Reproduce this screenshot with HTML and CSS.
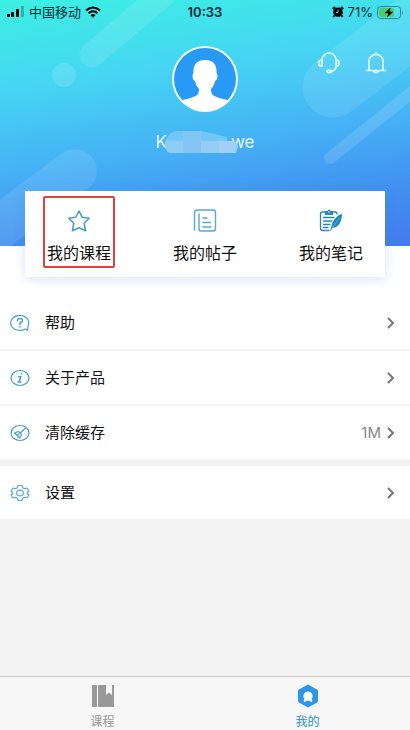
FILE: index.html
```html
<!DOCTYPE html>
<html lang="zh-CN">
<head>
<meta charset="utf-8">
<meta name="viewport" content="width=device-width, initial-scale=1">
<title>我的</title>
<link rel="stylesheet" href="styles.css">
</head>
<body>
<div class="app">
  <header class="hero">
    <svg class="hero-art" viewBox="0 0 410 246" preserveAspectRatio="xMidYMin slice" aria-hidden="true">
      <g fill="none" stroke="#fff" stroke-linecap="round">
        <path d="M92 55 180-20" stroke-width="25" stroke-opacity=".11"/>
        <path d="M64 75h.01" stroke-width="24" stroke-opacity=".13"/>
        <path d="M333 87 470-18" stroke-width="61" stroke-opacity=".1"/>
        <path d="M330 158 440 70" stroke-width="12" stroke-opacity=".13"/>
        <path d="M75 171-10 234" stroke-width="44" stroke-opacity=".1"/>
      </g>
    </svg>
    <div class="status">
      <div class="status-side">
        <svg width="19" height="12" viewBox="0 0 19 12" aria-hidden="true"><path d="M1 8h3v3H1zM5 6h3v5H5zM10 3h3v8h-3z"/><path d="M15 0h3v11h-3z" opacity=".25"/></svg>
        <span class="carrier">中国移动</span>
        <svg width="16" height="12" viewBox="0 0 16 12" aria-hidden="true"><g fill="none" stroke="#000" stroke-width="2"><path d="M1 4.500Q8-1.500 15 4.500M3.500 7.200Q8 3.300 12.500 7.200"/></g><path d="M5.500 9Q8 7 10.500 9L8 11.800z"/></svg>
      </div>
      <time class="clock">10:33</time>
      <div class="status-side status-end">
        <svg width="12" height="12" viewBox="0 0 12 12" aria-hidden="true"><circle cx="6" cy="6.200" r="4.800"/><path d="M.8 3 3 .9M11.200 3 9 .9M2.500 9.500 1.500 11M9.500 9.500l1 1.500" stroke="#000" stroke-width="2"/><path d="M6 3.500v3H3.800" fill="none" stroke="#53dfe8"/></svg>
        <span>71%</span>
        <svg width="27" height="13" viewBox="0 0 27 13" aria-hidden="true"><rect x=".5" y=".5" width="23" height="12" rx="3" fill="none" stroke="#278994"/><rect x="2" y="2" width="15" height="9" rx="2" fill="#4bce68"/><path d="M25 4.500q1.500 2 0 4z" fill="#278994"/><path d="M13.500 1.500 7.500 7.300h3.700l-1 4.200 6-5.800h-3.700z"/></svg>
      </div>
    </div>
    <div class="profile">
      <svg class="avatar" viewBox="0 0 66 66" role="img" aria-label="头像">
        <clipPath id="face"><circle cx="33" cy="33" r="32"/></clipPath>
        <circle cx="33" cy="33" r="33" fill="#f5fdff"/>
        <circle cx="33" cy="33" r="31" fill="#2999f6"/>
        <path clip-path="url(#face)" fill="#fff" d="M33 14c-8.500 0-12 5-11.500 12.500 0 1-1 1.500-1 3.500s1.200 5 2.500 5c.8 4 2.200 6 4 8 0 4-1 6-4.500 7.500C17 53 13 53 8 55v12h50V55c-5-2-9-2-14.500-4.500C40 49 39 47 39 43c1.800-2 3.200-4 4-8 1.300 0 2.500-3 2.500-5s-1-2.500-1-3.500C45 19 41.500 14 33 14z"/>
      </svg>
      <div class="tools">
        <button type="button" aria-label="客服"><svg width="24" height="24" viewBox="0 0 24 24"><g fill="none" stroke="#ecffff" stroke-width="1.600" stroke-linecap="round" stroke-linejoin="round"><path d="M5 9.500C5.400 5 8 2 12 2s6.800 3 7.200 7.500M5 9c-2 0-3.500 1-3.500 3S3 15.200 5 15.200zM19.200 9c2 0 3 1 3 3s-1 3.200-3 3.200zM19.200 15.200c-.6 3.200-2.200 4.800-5 5.200"/><rect x="10" y="19.200" width="4.500" height="2.300" rx="1"/></g></svg></button>
        <button type="button" aria-label="通知"><svg width="24" height="24" viewBox="0 0 24 24"><path fill="none" stroke="#ecffff" stroke-width="1.600" stroke-linecap="round" stroke-linejoin="round" d="M12 2v1.500M2.500 19.500h19M5 19.500V10a7 6.500 0 0 1 14 0v9.500M9.500 20q2.500 3.500 5 0"/></svg></button>
      </div>
    </div>
    <div class="name">
      <span>K</span>
      <svg class="mosaic" viewBox="0 0 74 24" aria-hidden="true">
        <path fill="#72c7f4" d="M0 12Q3 2 12 1h24l14 3 12 3v6H0z"/>
        <path fill="#82c6f5" d="M18 1h18v12H18z"/>
        <path fill="#8dcdf6" d="M0 11h18v12H4Q0 20 0 16z"/>
        <path fill="#86c5f6" d="M18 13h18v10H18z"/>
        <path fill="#94cef7" d="M36 11h18v12H36z"/>
        <path fill="#a1d0f7" d="M54 11h16l3 5-2 7H54z"/>
      </svg>
      <span class="name-end">we</span>
    </div>
  </header>

  <nav class="card">
    <a href="#courses" class="shortcut marked">
      <svg width="24" height="24" viewBox="0 0 24 24" aria-hidden="true"><path fill="none" stroke="#459fcd" stroke-width="1.600" stroke-linejoin="round" d="m12 2 3.200 6.200 7 1-5 5.100 1.400 7.400L12 18.800 5.400 21.700l1.400-7.400-5-5.100 7-1z"/></svg>
      <span>我的课程</span>
    </a>
    <a href="#posts" class="shortcut">
      <svg width="24" height="24" viewBox="0 0 24 24" aria-hidden="true"><g fill="none" stroke="#59a9d1" stroke-width="1.400" stroke-linecap="round"><path d="M1.500 21V4q0-3 3-3H20q2.500 0 2.500 2.500v16q0 2.500-2.500 2.500H8q-2 0-2-2.500V5M10 9h4M10 13.500h7.500M10 18h8"/></g></svg>
      <span>我的帖子</span>
    </a>
    <a href="#notes" class="shortcut">
      <svg width="24" height="24" viewBox="0 0 24 24" aria-hidden="true"><g fill="none" stroke="#2686b8" stroke-width="1.300" stroke-linecap="round"><path d="M10 21.500H3.500q-2 0-2-2V5q0-2 2-2H16q2 0 2 2M4.500 8.500H15M4.500 12H13M4.500 15.500H11M4.500 18.500H9"/></g><path fill="#2686b8" d="M6 2h2.500q0-1.500 1.500-1.500T11.500 2H14v4H6z"/><circle cx="10" cy="3" r=".8" fill="#fff"/><path fill="#1687bf" d="M23 5c-5 1-9.500 7-10.500 12L11 22.500l2.500-3.500C19 18.500 22.500 14 23 5z"/><path d="m20.500 9-7.500 10" stroke="#8acbe7" stroke-width=".7"/></svg>
      <span>我的笔记</span>
    </a>
  </nav>

  <main class="menu">
    <a href="#help" class="row">
      <svg class="row-icon" viewBox="0 0 20 18" aria-hidden="true"><g fill="none" stroke="#48a0cf" stroke-width="1.200" stroke-linecap="round" stroke-linejoin="round"><path d="M15 15A9 7.500 0 1 1 18.200 11.500L17.500 16.500z"/><path stroke-width="1.500" d="M7.500 6.800q0-2.200 2.500-2.200t2.500 2Q12.500 8 10 9v1.500M10 12.800v.2"/></g></svg>
      <span class="row-label">帮助</span>
      <svg class="chevron" viewBox="0 0 8 12" aria-hidden="true"><path d="m1 1 5 5-5 5"/></svg>
    </a>
    <a href="#about" class="row">
      <svg class="row-icon" viewBox="0 0 20 18" aria-hidden="true"><g fill="none" stroke="#48a0cf" stroke-width="1.200" stroke-linecap="round"><ellipse cx="10" cy="9" rx="9" ry="7.500"/><path stroke-width="1.500" d="M11.200 4.800h.2M8.800 7.800h1.900L9.300 13h1.500M8 13h1"/></g></svg>
      <span class="row-label">关于产品</span>
      <svg class="chevron" viewBox="0 0 8 12" aria-hidden="true"><path d="m1 1 5 5-5 5"/></svg>
    </a>
    <a href="#cache" class="row">
      <svg class="row-icon" viewBox="0 0 20 18" aria-hidden="true"><g fill="none" stroke="#48a0cf" stroke-width="1.200" stroke-linecap="round" stroke-linejoin="round"><ellipse cx="10" cy="9" rx="9" ry="7.500"/><path d="m15.200 4.200-4.500 4.300M4.500 9l4-1.500 3 2.800-1.800 3.700zM7.300 11.300l1.500-1.300"/></g></svg>
      <span class="row-label">清除缓存</span>
      <span class="row-value">1M</span>
      <svg class="chevron" viewBox="0 0 8 12" aria-hidden="true"><path d="m1 1 5 5-5 5"/></svg>
    </a>
    <a href="#settings" class="row row-group">
      <svg class="row-icon" viewBox="0 0 20 18" aria-hidden="true"><g fill="none" stroke="#58a9d0" stroke-width="1.200" stroke-linejoin="round"><path d="M8 1.500h4l.7 2.300 1.700.9 2.600-.7 2 3-1.700 1.500v1L19 11l-2 3-2.600-.7-1.700.9-.7 2.300H8l-.7-2.300-1.700-.9L3 14l-2-3 1.700-1.500v-1L1 7l2-3 2.600.7 1.700-.9z"/><ellipse cx="10" cy="9" rx="3.300" ry="2.900"/></g></svg>
      <span class="row-label">设置</span>
      <svg class="chevron" viewBox="0 0 8 12" aria-hidden="true"><path d="m1 1 5 5-5 5"/></svg>
    </a>
  </main>

  <nav class="tabs">
    <a href="#course-tab" class="tab">
      <svg width="24" height="24" viewBox="0 0 24 24" aria-hidden="true"><path fill="#999" d="M1 1h5v22H1zM7 1h8v10l3-2.500 3 2.500V1h2v22H7z"/></svg>
      <span>课程</span>
    </a>
    <a href="#me" class="tab active" aria-current="page">
      <svg width="24" height="24" viewBox="0 0 24 24" aria-hidden="true"><path fill="#2f96e6" stroke="#2f96e6" stroke-width="2" stroke-linejoin="round" d="m12 1.500 9 5.200v10.600l-9 5.200-9-5.200V6.700z"/><path fill="#f6faff" d="M12 7.500a4.500 4.500 0 0 1 3.500 7.500l1 2-1.300 1.200-1.500-1.500h-3.400l-1.500 1.500L7.500 17l1-2A4.500 4.500 0 0 1 12 7.500z"/></svg>
      <span>我的</span>
    </a>
  </nav>
</div>
</body>
</html>
```
FILE: styles.css
```css
* {
  box-sizing: border-box;
}

body {
  margin: 0;
  background: #f3f3f3;
  color: #111;
  font-family: Inter, "Noto Sans CJK SC", sans-serif;
  font-size: 15px;
  line-height: 24px;
}

a {
  color: inherit;
  text-decoration: none;
}

svg {
  display: block;
  flex: none;
}

.app {
  display: flex;
  flex-direction: column;
  min-height: 100vh;
}

.hero {
  position: relative;
  padding-bottom: 92px;
  background: linear-gradient(172deg, #3cf0e2 0%, #46d5f3 30%, #45b0f5 58%, #4290f0 80%, #457bee 100%);
}

.hero-art {
  position: absolute;
  inset: 0;
  width: 100%;
  height: 100%;
}

.status {
  position: relative;
  display: grid;
  grid-template-columns: 1fr auto 1fr;
  align-items: center;
  height: 22px;
  padding: 0 6px;
  color: #0b2a33;
  font-size: 13px;
}

.status-side {
  display: flex;
  align-items: center;
  gap: 4px;
}

.status-end {
  justify-content: flex-end;
}

.clock {
  font-weight: 600;
}

.profile {
  position: relative;
  display: grid;
  grid-template-columns: 1fr auto 1fr;
  margin-top: 24px;
  padding: 0 22px;
}

.avatar {
  grid-column: 2;
  width: 66px;
  height: 66px;
}

.tools {
  display: flex;
  justify-content: flex-end;
  align-items: flex-start;
  gap: 23px;
  padding-top: 5px;
}

.tools button {
  padding: 0;
  border: 0;
  background: none;
  cursor: pointer;
}

.name {
  position: relative;
  display: flex;
  justify-content: center;
  align-items: center;
  margin-top: 18px;
  color: #e9f8ff;
  font-size: 17px;
}

.mosaic {
  z-index: 1;
  width: 74px;
  height: 24px;
  margin-left: -2px;
}

.name-end {
  margin-left: -8px;
}

.card {
  position: relative;
  display: flex;
  justify-content: space-between;
  margin: -55px 25px 0;
  padding: 5px 18px 9px;
  background: #fff;
  box-shadow: 0 2px 10px rgba(70, 120, 240, .22);
}

.hero,
.card {
  z-index: 1;
}

.shortcut {
  display: flex;
  flex-direction: column;
  align-items: center;
  gap: 8px;
  padding: 11px 2px 1px;
  border: 2px solid transparent;
  border-radius: 2px;
  font-size: 16px;
}

.marked {
  border-color: #d9433c;
}

.menu {
  margin-top: -55px;
  padding-top: 74px;
  background: #fff;
}

.row {
  display: flex;
  align-items: center;
  height: 55px;
  padding: 0 15px 0 10px;
  border-bottom: 2px solid #f3f3f3;
  background: #fff;
}

.row-icon {
  width: 20px;
  height: 18px;
  margin-right: 15px;
}

.row-label {
  flex: 1;
}

.row-value {
  margin-right: 6px;
  color: #888;
}

.row-group {
  height: 60px;
  border-top: 5px solid #f3f3f3;
}

.chevron {
  width: 8px;
  height: 12px;
  fill: none;
  stroke: #777;
  stroke-width: 2;
}

.tabs {
  display: grid;
  grid-template-columns: 1fr 1fr;
  margin-top: auto;
  border-top: 1px solid #c9c9c9;
  background: #f7f7f7;
}

.tab {
  display: flex;
  flex-direction: column;
  align-items: center;
  gap: 5px;
  padding: 7px 0 0;
  color: #999;
  font-size: 12px;
  line-height: 17px;
}

.active {
  color: #2d8fc0;
}
```
